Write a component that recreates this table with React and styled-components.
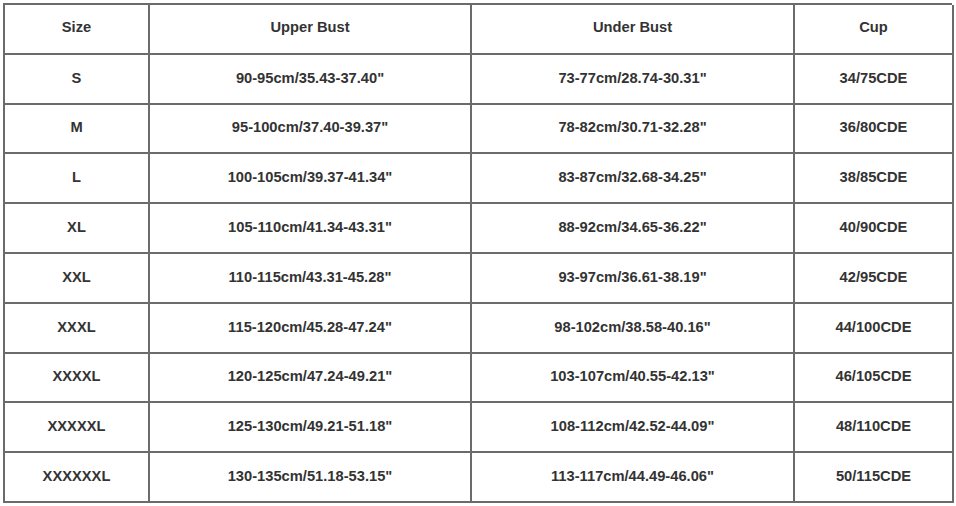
import React from "react";
import styled, { createGlobalStyle } from "styled-components";

const Global = createGlobalStyle`
  html, body { margin: 0; padding: 0; background: #ffffff; }
  body { padding: 3px 0 0 3px; }
`;

const Table = styled.div`
  display: grid;
  grid-template-columns: 145px 322px 323px 159px;
  grid-auto-rows: 49.8px;
  width: 949px;
  box-sizing: border-box;
  border-left: 2px solid #6b6b6b;
  border-top: 2px solid #6b6b6b;
  font-family: "Liberation Sans", Arial, sans-serif;
`;

const Cell = styled.div`
  box-sizing: border-box;
  border-right: 2px solid #6b6b6b;
  border-bottom: 2px solid #6b6b6b;
  display: flex;
  align-items: center;
  justify-content: center;
  padding-bottom: ${(p) => (p.$head ? "4px" : "2px")};
  font-weight: bold;
  font-size: 14.7px;
  color: #333333;
`;

const headers = ["Size", "Upper Bust", "Under Bust", "Cup"];
const rows = [
  ["S", "90-95cm/35.43-37.40\"", "73-77cm/28.74-30.31\"", "34/75CDE"],
  ["M", "95-100cm/37.40-39.37\"", "78-82cm/30.71-32.28\"", "36/80CDE"],
  ["L", "100-105cm/39.37-41.34\"", "83-87cm/32.68-34.25\"", "38/85CDE"],
  ["XL", "105-110cm/41.34-43.31\"", "88-92cm/34.65-36.22\"", "40/90CDE"],
  ["XXL", "110-115cm/43.31-45.28\"", "93-97cm/36.61-38.19\"", "42/95CDE"],
  ["XXXL", "115-120cm/45.28-47.24\"", "98-102cm/38.58-40.16\"", "44/100CDE"],
  ["XXXXL", "120-125cm/47.24-49.21\"", "103-107cm/40.55-42.13\"", "46/105CDE"],
  ["XXXXXL", "125-130cm/49.21-51.18\"", "108-112cm/42.52-44.09\"", "48/110CDE"],
  ["XXXXXXL", "130-135cm/51.18-53.15\"", "113-117cm/44.49-46.06\"", "50/115CDE"],
];

export default function App() {
  return (
    <>
      <Global />
      <Table>
        {headers.map((h) => (
          <Cell key={h} $head>{h}</Cell>
        ))}
        {rows.map((r) =>
          r.map((c, i) => <Cell key={r[0] + i}>{c}</Cell>)
        )}
      </Table>
    </>
  );
}
